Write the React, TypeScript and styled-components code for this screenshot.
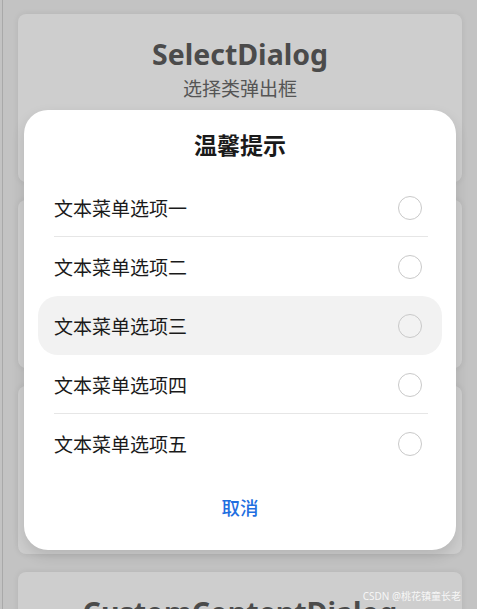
import React from "react";
import styled, { createGlobalStyle } from "styled-components";

const GlobalStyle = createGlobalStyle`
  html, body {
    margin: 0;
    padding: 0;
    background: #c3c3c3;
    font-family: "Noto Sans", "Noto Sans CJK SC", sans-serif;
  }
`;

const Screen = styled.div`
  position: relative;
  width: 475px;
  height: 609px;
  overflow: hidden;
  background: #c3c3c3;
  border-left: 1px solid #a9a9a9;
  box-sizing: border-box;
  margin-left: 2px;
`;

const CardList = styled.div`
  display: flex;
  flex-direction: column;
  gap: 18px;
  padding: 14px 15px 0 15px;
`;

const Card = styled.div`
  height: 168px;
  border-radius: 8px;
  background: #cecece;
  box-shadow: 0 0 6px rgba(0, 0, 0, 0.08);
  display: flex;
  flex-direction: column;
  align-items: center;
  padding-top: 20px;
  box-sizing: border-box;
`;

const CardTitle = styled.div`
  font-family: "Noto Sans", "Noto Sans CJK SC", sans-serif;
  font-weight: 700;
  font-size: 28.5px;
  line-height: 40px;
  color: #4b4b4b;
`;

const CardSub = styled.div`
  font-family: "Noto Sans CJK SC", sans-serif;
  font-size: 19px;
  line-height: 28px;
  color: #555;
`;

const Dialog = styled.div`
  position: absolute;
  left: 21px;
  top: 110px;
  width: 432px;
  height: 440px;
  border-radius: 24px;
  background: #fff;
  box-shadow: 0 6px 14px rgba(0, 0, 0, 0.12);
  display: flex;
  flex-direction: column;
  padding: 0 14px;
  box-sizing: border-box;
`;

const DialogTitle = styled.div`
  height: 68px;
  display: flex;
  align-items: center;
  justify-content: center;
  font-family: "Noto Sans CJK SC", sans-serif;
  font-weight: 700;
  font-size: 23px;
  color: #1a1a1a;
`;

const Options = styled.div`
  display: flex;
  flex-direction: column;
`;

const Option = styled.div<{ $active?: boolean; $divider?: boolean }>`
  position: relative;
  height: 59px;
  display: flex;
  align-items: center;
  justify-content: space-between;
  padding: 0 20px 0 16px;
  border-radius: 20px;
  background: ${(p) => (p.$active ? "#f2f2f2" : "transparent")};

  &::after {
    content: "";
    display: ${(p) => (p.$divider ? "block" : "none")};
    position: absolute;
    left: 16px;
    right: 14px;
    bottom: 0;
    height: 1px;
    background: #e6e6e6;
  }
`;

const OptionText = styled.span`
  font-family: "Noto Sans CJK SC", sans-serif;
  font-size: 19px;
  color: #1a1a1a;
`;

const Radio = styled.span`
  width: 22px;
  height: 22px;
  border-radius: 50%;
  border: 1.5px solid #c9c9c9;
`;

const Footer = styled.div`
  flex: 1;
  display: flex;
  align-items: center;
  justify-content: center;
  padding-bottom: 10px;
`;

const CancelButton = styled.button`
  border: none;
  background: none;
  font-family: "Noto Sans CJK SC", sans-serif;
  font-size: 18.5px;
  font-weight: 500;
  color: #1f6fe0;
  cursor: pointer;
`;

const Watermark = styled.div`
  position: absolute;
  right: 16px;
  bottom: 6px;
  font-family: "Noto Sans", "Noto Sans CJK SC", sans-serif;
  font-size: 10px;
  color: rgba(255, 255, 255, 0.85);
`;

const options = [
  "文本菜单选项一",
  "文本菜单选项二",
  "文本菜单选项三",
  "文本菜单选项四",
  "文本菜单选项五",
];

export default function App() {
  return (
    <>
      <GlobalStyle />
      <Screen>
        <CardList>
          <Card>
            <CardTitle>SelectDialog</CardTitle>
            <CardSub>选择类弹出框</CardSub>
          </Card>
          <Card />
          <Card />
          <Card>
            <CardTitle>CustomContentDialog</CardTitle>
          </Card>
        </CardList>
        <Dialog>
          <DialogTitle>温馨提示</DialogTitle>
          <Options>
            {options.map((label, i) => (
              <Option
                key={label}
                $active={i === 2}
                $divider={i !== options.length - 1 && i !== 1 && i !== 2}
              >
                <OptionText>{label}</OptionText>
                <Radio />
              </Option>
            ))}
          </Options>
          <Footer>
            <CancelButton>取消</CancelButton>
          </Footer>
        </Dialog>
        <Watermark>CSDN @桃花镇童长老</Watermark>
      </Screen>
    </>
  );
}
